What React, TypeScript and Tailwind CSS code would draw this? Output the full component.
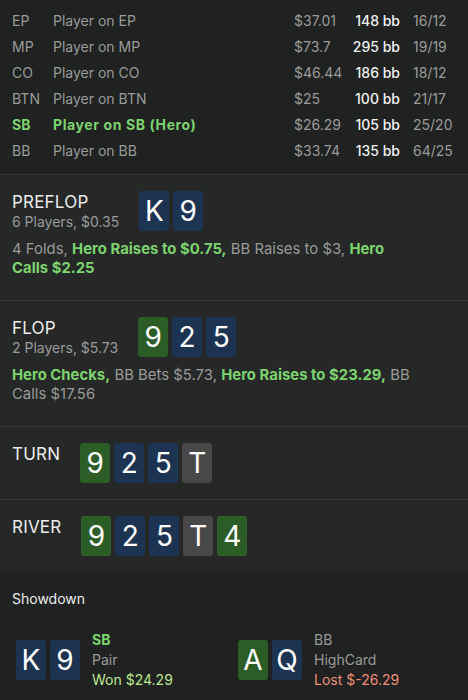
import React from "react";

type Card = { r: string; c: "b" | "g" | "k" };

const cardBg: Record<string, string> = {
  b: "bg-[#1c3352]",
  g: "bg-[#2c5d27]",
  k: "bg-[#484848]",
};

function PCard({ r, c }: Card) {
  return (
    <div
      className={`w-[30px] h-[40px] rounded-[3px] flex items-center justify-center text-[28px] leading-none text-white ${cardBg[c]}`}
    >
      {r}
    </div>
  );
}

function Cards({ cards }: { cards: Card[] }) {
  return (
    <div className="flex gap-1 shrink-0">
      {cards.map((c, i) => (
        <PCard key={i} {...c} />
      ))}
    </div>
  );
}

const players = [
  { pos: "EP", name: "Player on EP", money: "$37.01", bb: "148 bb", ratio: "16/12" },
  { pos: "MP", name: "Player on MP", money: "$73.7", bb: "295 bb", ratio: "19/19" },
  { pos: "CO", name: "Player on CO", money: "$46.44", bb: "186 bb", ratio: "18/12" },
  { pos: "BTN", name: "Player on BTN", money: "$25", bb: "100 bb", ratio: "21/17" },
  { pos: "SB", name: "Player on SB (Hero)", money: "$26.29", bb: "105 bb", ratio: "25/20", hero: true },
  { pos: "BB", name: "Player on BB", money: "$33.74", bb: "135 bb", ratio: "64/25" },
];

const G = ({ children }: { children: React.ReactNode }) => (
  <span className="font-bold text-[#7dd36f]">{children}</span>
);
const N = ({ children }: { children: React.ReactNode }) => <span>{children}</span>;

function Street({
  title,
  sub,
  cards,
  children,
}: {
  title: string;
  sub?: string;
  cards: Card[];
  children?: React.ReactNode;
}) {
  return (
    <section
      className={`border-t border-[#373a38] bg-[#252826] px-3 pt-4 ${children ? "pb-[22px]" : "pb-4"}`}
    >
      <div className="flex items-start gap-5">
        <div>
          <div className="text-[17px] leading-[22px] tracking-[0.2px] text-[#ececec]">{title}</div>
          {sub && <div className="text-[14px] leading-[18px] text-[#9a9a9a]">{sub}</div>}
        </div>
        <Cards cards={cards} />
      </div>
      {children && (
        <div className="mt-[9px] w-[410px] text-[14.8px] leading-[19px] tracking-[0.05px] text-[#9a9a9a]">
          {children}
        </div>
      )}
    </section>
  );
}

export default function App() {
  const board: Card[] = [
    { r: "9", c: "g" },
    { r: "2", c: "b" },
    { r: "5", c: "b" },
    { r: "T", c: "k" },
    { r: "4", c: "g" },
  ];
  return (
    <div
      className="w-[468px] min-h-[700px] bg-[#1f2220]"
      style={{ fontFamily: "Inter, 'Noto Sans', sans-serif" }}
    >
      <div className="pt-[7px] pb-[11px] px-3">
        {players.map((p) => (
          <div
            key={p.pos}
            className={`flex items-center h-[26px] text-[14px] whitespace-nowrap ${p.hero ? "font-bold text-[#7dd36f]" : "text-[#9a9a9a]"}`}
          >
            <div className="w-[41px] shrink-0">{p.pos}</div>
            <div className={`flex-1 min-w-0 ${p.hero ? "tracking-[0.6px]" : ""}`}>{p.name}</div>
            <div className={`w-[56px] shrink-0 ${p.hero ? "font-normal text-[#9a9a9a]" : ""}`}>{p.money}</div>
            <div className="w-[50px] shrink-0 text-right font-medium text-[#f2f2f2]">{p.bb}</div>
            <div className={`ml-[13px] w-[43px] shrink-0 ${p.hero ? "font-normal text-[#9a9a9a]" : ""}`}>{p.ratio}</div>
          </div>
        ))}
      </div>

      <Street
        title="PREFLOP"
        sub="6 Players, $0.35"
        cards={[
          { r: "K", c: "b" },
          { r: "9", c: "b" },
        ]}
      >
        <N>4 Folds,</N> <G>Hero Raises to $0.75,</G> <N>BB Raises to $3,</N> <G>Hero</G>{" "}
        <G>Calls $2.25</G>
      </Street>

      <Street title="FLOP" sub="2 Players, $5.73" cards={board.slice(0, 3)}>
        <G>Hero Checks,</G> <N>BB Bets $5.73,</N> <G>Hero Raises to $23.29,</G> <N>BB</N>{" "}
        <N>Calls $17.56</N>
      </Street>

      <Street title="TURN" cards={board.slice(0, 4)} />
      <Street title="RIVER" cards={board} />

      <section className="bg-[#1f2220] px-3 pt-[17px] pb-4">
        <div className="text-[14px] leading-5 text-[#ececec]">Showdown</div>
        <div className="mt-[17px] grid grid-cols-2">
          <div className="p-1 flex items-center gap-3">
            <Cards
              cards={[
                { r: "K", c: "b" },
                { r: "9", c: "b" },
              ]}
            />
            <div className="text-[14px] leading-5">
              <div className="font-bold text-[#7dd36f]">SB</div>
              <div className="text-[#9a9a9a]">Pair</div>
              <div className="text-[#bde88f]">Won $24.29</div>
            </div>
          </div>
          <div className="p-1 flex items-center gap-3">
            <Cards
              cards={[
                { r: "A", c: "g" },
                { r: "Q", c: "b" },
              ]}
            />
            <div className="text-[14px] leading-5">
              <div className="text-[#9a9a9a]">BB</div>
              <div className="text-[#9a9a9a]">HighCard</div>
              <div className="text-[#f08c7c]">Lost $-26.29</div>
            </div>
          </div>
        </div>
      </section>
    </div>
  );
}
